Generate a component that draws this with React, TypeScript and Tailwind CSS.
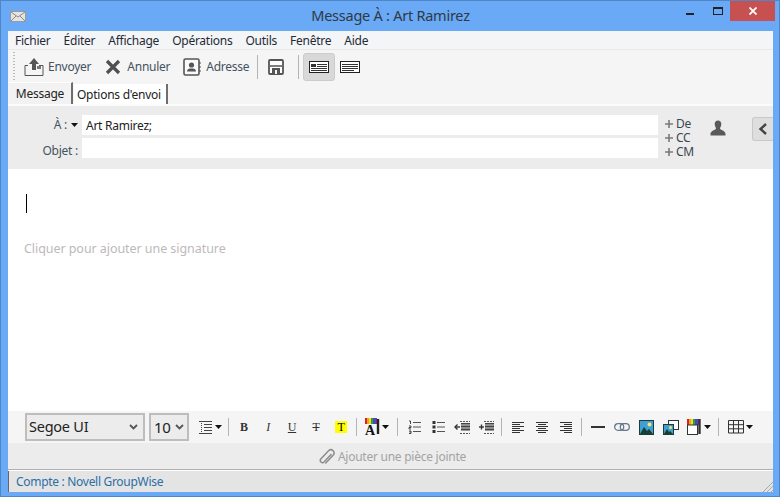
import React from 'react';

const Sep = ({ h = 'h-[24px]', m = 'mx-[6px]' }: { h?: string; m?: string }) => (
  <div className={`w-px ${h} ${m} bg-[#b4b4b4] shrink-0`} />
);

const Caret = () => (
  <svg width="7" height="4" viewBox="0 0 7 4" className="shrink-0"><path d="M0 0h7L3.5 4z" fill="#111" /></svg>
);

const Mail = () => (
  <svg width="16" height="11" viewBox="0 0 16 11">
    <rect x="0.5" y="0.5" width="15" height="10" fill="#e4e4e4" stroke="#9a9a9a" />
    <path d="M1 1l7 5 7-5M1 10l5-5M15 10l-5-5" fill="none" stroke="#8a8a8a" />
  </svg>
);

const SendIcon = () => (
  <svg width="20" height="20" viewBox="0 0 20 20">
    <path d="M4 8.5H1v10h18v-10h-4" fill="none" stroke="#555" />
    <path d="M10 1l5 6h-3v6H8V7H5z" fill="#555" />
    <path d="M13 9h4v3h-4z" fill="#777" />
  </svg>
);

const CancelIcon = () => (
  <svg width="16" height="16" viewBox="0 0 16 16">
    <path d="M2 2l12 12M14 2L2 14" stroke="#4f4f4f" strokeWidth="3.2" />
  </svg>
);

const AddressIcon = () => (
  <svg width="18" height="18" viewBox="0 0 18 18">
    <rect x="1" y="1" width="15" height="16" rx="1.5" fill="#fafafa" stroke="#555" strokeWidth="1.6" />
    <circle cx="8.5" cy="7" r="2.6" fill="#555" />
    <path d="M4 13.5c0-2.5 2-3 4.500-3s4.500.5 4.500 3z" fill="#555" />
    <path d="M17 4v2M17 8v2M17 12v2" stroke="#555" />
  </svg>
);

const SaveIcon = () => (
  <svg width="16" height="16" viewBox="0 0 16 16">
    <rect x="1" y="1" width="14" height="14" rx="1" fill="#fff" stroke="#555" strokeWidth="1.8" />
    <path d="M2 7h12" stroke="#555" strokeWidth="1.500" />
    <path d="M4 15V9h8v6z" fill="#555" />
    <rect x="7" y="11" width="2" height="4" fill="#f5f5f5" />
  </svg>
);

const ViewA = () => (
  <svg width="20" height="12" viewBox="0 0 20 12">
    <rect x="0.500" y="0.500" width="19" height="11" fill="#fff" stroke="#222" />
    <rect x="2" y="3" width="5" height="3" fill="#333" />
    <path d="M8 3.500h10M8 5.500h10M2 7.500h16M2 9.500h16" stroke="#333" />
  </svg>
);

const ViewB = () => (
  <svg width="20" height="12" viewBox="0 0 20 12">
    <rect x="0.500" y="0.500" width="19" height="11" fill="#fff" stroke="#222" />
    <path d="M2 3.500h16M2 5.500h16M2 7.500h16M2 9.500h12" stroke="#333" />
  </svg>
);

const Person = () => (
  <svg width="16" height="16" viewBox="0 0 16 16">
    <path d="M8 0.500c2 0 3.300 1.500 3.300 3.500S10 7.500 10 8.500c0 1.500 5.500 2 5.500 5.500v1.500H.5V14c0-3.500 5.500-4 5.500-5.500C6 7.500 4.700 6 4.700 4S6 .5 8 .5z" fill="#595959" />
  </svg>
);

const Plus = () => (
  <svg width="8" height="8" viewBox="0 0 8 8" className="shrink-0"><path d="M4 0v8M0 4h8" stroke="#7a7a7a" strokeWidth="1.600" /></svg>
);

const Chevron = ({ s = '#555' }: { s?: string }) => (
  <svg width="9" height="6" viewBox="0 0 9 6"><path d="M1 1l3.500 3.500L8 1" fill="none" stroke={s} strokeWidth="1.800" /></svg>
);

const Lines = ({ rows }: { rows: [number, number][] }) => (
  <svg width="13" height="13" viewBox="0 0 13 13">
    {rows.map(([x, w], i) => (
      <rect key={i} x={x} y={i * 2 + 1} width={w} height="1" fill="#333" />
    ))}
  </svg>
);

const LineSpacing = () => (
  <svg width="14" height="13" viewBox="0 0 14 13">
    <path d="M0 .5h13M5 3.500h8M5 6.500h8M5 9.500h8M0 12.500h13" stroke="#444" />
    <path d="M2.500 2v9" stroke="#444" strokeDasharray="1 1" />
  </svg>
);

const NumList = () => (
  <svg width="14" height="14" viewBox="0 0 14 14">
    <path d="M5 2.500h8M5 7h8M5 11.500h8" stroke="#555" />
    <path d="M1 1h1.500v3M1 6h2v1.500H1V9h2M1 11h2v1H1.500M3 12v1.500H1" fill="none" stroke="#333" strokeWidth=".9" />
  </svg>
);

const BulletList = () => (
  <svg width="14" height="14" viewBox="0 0 14 14">
    <path d="M5 2.500h8M5 7h8M5 11.500h8" stroke="#555" />
    <rect x="0.500" y="1" width="3" height="3" fill="#333" />
    <rect x="0.500" y="5.500" width="3" height="3" fill="#333" />
    <rect x="0.500" y="10" width="3" height="3" fill="#333" />
  </svg>
);

const Indent = ({ flip }: { flip?: boolean }) => (
  <svg width="17" height="15" viewBox="0 0 17 15">
    <path d="M6 1.500h10M6 13.500h10" stroke="#555" strokeDasharray="2 1" />
    <rect x="7" y="3" width="9" height="7.500" fill="#444" />
    <path d="M7 5h9M7 8h9" stroke="#ddd" />
    <path d="M1 7h5" stroke="#333" strokeWidth="1.400" />
    {flip ? <path d="M3.500 4.500v5" stroke="#333" strokeWidth="1.400" /> : <path d="M3.500 4.500L1 7l2.500 2.500" fill="none" stroke="#333" strokeWidth="1.400" />}
  </svg>
);

const LinkIcon = () => (
  <svg width="16" height="8" viewBox="0 0 16 8">
    <rect x="0.700" y="0.700" width="9" height="6.600" rx="3.300" fill="none" stroke="#66788c" strokeWidth="1.300" />
    <rect x="6.300" y="0.700" width="9" height="6.600" rx="3.300" fill="none" stroke="#66788c" strokeWidth="1.300" />
  </svg>
);

const Picture = ({ size = 15 }: { size?: number }) => (
  <svg width={size} height={size} viewBox="0 0 15 15">
    <rect width="15" height="15" fill="#1d3b3a" />
    <rect x="1" y="1" width="13" height="13" fill="#3f9fd6" />
    <circle cx="10.500" cy="4.500" r="2" fill="#f4e86a" />
    <path d="M1 14l4-7 3 4 2-2 4 5z" fill="#17402f" />
  </svg>
);

const Pictures = () => (
  <svg width="16" height="15" viewBox="0 0 16 15">
    <rect x="5.500" y="0.500" width="10" height="9" fill="#fff" stroke="#333" />
    <rect x="0" y="4" width="11" height="11" fill="#1d3b3a" />
    <rect x="1" y="5" width="9" height="9" fill="#3f9fd6" />
    <circle cx="7.500" cy="7.500" r="1.500" fill="#f4e86a" />
    <path d="M1 14l3-5 2 3 1-1 3 3z" fill="#17402f" />
  </svg>
);

const Rainbow = () => (
  <>
    <rect x="0" y="0" width="2" height="6" fill="#e02020" />
    <rect x="2" y="0" width="2" height="6" fill="#f4a020" />
    <rect x="4" y="0" width="2" height="6" fill="#e8e020" />
    <rect x="6" y="0" width="2" height="6" fill="#30a030" />
    <rect x="8" y="0" width="2" height="6" fill="#3050d0" />
    <rect x="10" y="0" width="2" height="6" fill="#8030b0" />
  </>
);

const TextColor = () => (
  <svg width="16" height="21" viewBox="0 0 16 21" className="mt-[3px]">
    <Rainbow />
    <path d="M13 1v15" stroke="#222" strokeWidth="2.400" />
    <text x="0" y="17" fontFamily="'Liberation Serif', serif" fontWeight="700" fontSize="14" fill="#111">A</text>
  </svg>
);

const BgColor = () => (
  <svg width="15" height="16" viewBox="0 0 15 16">
    <Rainbow />
    <rect x="0.500" y="6" width="10" height="9.500" fill="#fff" stroke="#333" />
    <path d="M12.500 0v15" stroke="#333" strokeWidth="2.400" />
  </svg>
);

const TableIcon = () => (
  <svg width="17" height="14" viewBox="0 0 17 14">
    <path d="M.5.500h15v12.500H.5zM.5 4.700h15M.5 8.800h15M5.500.5V13M10.500.5V13" fill="none" stroke="#333" />
  </svg>
);

const Clip = () => (
  <svg width="16" height="18" viewBox="0 0 16 18">
    <path d="M13 5.500l-7.500 8a2.200 2.200 0 01-3.200-3l8-8.500a3.200 3.200 0 014.500 4.500l-8 8.500" fill="none" stroke="#8c8c8c" strokeWidth="1.500" transform="translate(-.5 .5)" />
  </svg>
);

const ResizeGrip = () => (
  <svg width="10" height="10" viewBox="0 0 10 10" className="shrink-0 self-end">
    <path d="M0 10L10 0M4 10l6-6M8 10l2-2" stroke="#a8a8a8" />
  </svg>
);

const Grip = () => (
  <div className="w-[2px] h-[30px] ml-[5px] shrink-0 bg-[repeating-linear-gradient(to_bottom,#bbbbbb_0,#bbbbbb_1px,transparent_1px,transparent_3px)]" />
);

const ToolButton = ({ icon, label, className }: { icon: React.ReactNode; label: string; className?: string }) => (
  <div className={`flex items-center ${className ?? ''}`}>
    {icon}
    <span className="text-[#45525f]">{label}</span>
  </div>
);

const FieldAction = ({ label }: { label: string }) => (
  <div className="flex items-center gap-[3px] h-[14px]">
    <Plus />
    <span className="text-[#3c4650]">{label}</span>
  </div>
);

const menus = ['Fichier', 'Éditer', 'Affichage', 'Opérations', 'Outils', 'Fenêtre', 'Aide'];

export default function App() {
  return (
    <div className="w-[780px] h-[497px] bg-[#69a9f5] border border-[#4f86c6] flex flex-col overflow-hidden text-[12px] tracking-[-0.25px] text-[#222] font-['Noto_Sans','Open_Sans',sans-serif]">
      {/* Title bar */}
      <div className="h-[30px] shrink-0 flex items-start">
        <div className="w-[40px] pl-[9px] pt-[10px] shrink-0"><Mail /></div>
        <div className="flex-1 text-center pt-[3px] text-[14.500px] leading-[22px] text-[#2f3a45] pl-[65px]">Message À : Art Ramirez</div>
        <div className="w-[100px] mr-[4px] flex shrink-0 items-start">
          <div className="w-[30px] h-[20px] flex justify-center items-end pb-[6px]"><div className="w-[8px] h-[2px] bg-[#222]" /></div>
          <div className="w-[25px] pt-[6px] flex justify-center"><div className="w-[10px] h-[8px] border border-t-2 border-[#222]" /></div>
          <div className="w-[45px] h-[20px] bg-[#c75050] flex items-center justify-center">
            <svg width="8" height="8" viewBox="0 0 8 8"><path d="M.5.5l7 7M7.500.5l-7 7" stroke="#fff" strokeWidth="1.800" /></svg>
          </div>
        </div>
      </div>

      {/* Window content */}
      <div className="flex-1 ml-[7px] mr-[6px] mb-[4px] bg-white flex flex-col min-h-0 overflow-hidden">
        <div className="h-[19px] shrink-0 bg-[#f4f5f7] border-b border-[#e8e8e8] flex items-center pl-[7px] pt-[2px] gap-[13px] text-[#1e2a36]">
          {menus.map((m) => <span key={m}>{m}</span>)}
        </div>

        <div className="h-[34px] shrink-0 bg-[#f5f5f5] flex items-center">
          <Grip />
          <ToolButton className="ml-[9px] gap-[4px]" icon={<SendIcon />} label="Envoyer" />
          <ToolButton className="ml-[14px] gap-[6px]" icon={<CancelIcon />} label="Annuler" />
          <ToolButton className="ml-[13px] gap-[5px]" icon={<AddressIcon />} label="Adresse" />
          <Sep h="h-[24px]" m="ml-[8px] mr-[10px]" />
          <SaveIcon />
          <Sep h="h-[24px]" m="ml-[14px] mr-[4px]" />
          <div className="w-[32px] h-[28px] rounded-[3px] bg-[#d8d8d8] border border-[#cccccc] flex items-center justify-center"><ViewA /></div>
          <div className="ml-[5px]"><ViewB /></div>
        </div>

        <div className="h-[22px] shrink-0 bg-[#f5f5f5] border-b-2 border-[#fbfbfb] flex items-end pl-px">
          <div className="h-[22px] w-[64px] bg-[#f2f2f2] border-t border-white border-r-2 border-r-[#6e6e6e] text-center leading-[22px] text-[#222]">Message</div>
          <div className="h-[20px] ml-px pl-[3px] pr-[5px] bg-white border-r-2 border-r-[#6e6e6e] leading-[21px] text-[#222]">Options d'envoi</div>
        </div>

        <div className="h-[63px] shrink-0 bg-[#ececec] flex items-start">
          <div className="w-[74px] pt-[9px] flex flex-col items-end pr-[3px] shrink-0 text-[#45525f]">
            <div className="flex items-center h-[20px] gap-[4px] mr-[1px]"><span>À :</span><Caret /></div>
            <div className="h-[20px] leading-[25px] mt-[3px] mr-[1px]">Objet :</div>
          </div>
          <div className="w-[576px] pt-[9px] flex flex-col gap-[3px] shrink-0">
            <div className="h-[20px] bg-white pl-[4px] leading-[21px] text-[#222] text-[12px]">Art Ramirez;</div>
            <div className="h-[20px] bg-white" />
          </div>
          <div className="ml-[7px] pt-[11px] flex flex-col w-[45px] shrink-0 text-[12px] leading-[14px]">
            <FieldAction label="De" />
            <FieldAction label="CC" />
            <FieldAction label="CM" />
          </div>
          <div className="mt-[14px] shrink-0"><Person /></div>
          <div className="mt-[11px] ml-[26px] w-[21px] h-[24px] bg-[#dedede] border border-r-0 border-[#c8c8c8] rounded-l-[3px] flex items-center justify-center shrink-0">
            <svg width="10" height="12" viewBox="0 0 10 12"><path d="M8 1L2.500 6 8 11" fill="none" stroke="#444" strokeWidth="2.400" /></svg>
          </div>
        </div>

        {/* Message body */}
        <div className="flex-1 bg-white pl-[16px] pt-[25px] min-h-0">
          <div className="w-px h-[19px] bg-black ml-[2px]" />
          <div className="mt-[27px] text-[#bdb9ba] text-[12.500px] tracking-[-0.06px] leading-[18px]">Cliquer pour ajouter une signature</div>
        </div>

        {/* Format toolbar */}
        <div className="h-[32px] shrink-0 bg-[#f5f5f5] flex items-center pl-[17px]">
          <div className="w-[120px] h-[28px] bg-[#ececec] border-2 border-[#bdbdbd] flex items-center justify-between pl-[2px] pr-[5px] text-[14.500px] text-[#222]">
            <span>Segoe UI</span><Chevron />
          </div>
          <div className="ml-[4px] w-[40px] h-[28px] bg-[#ececec] border-2 border-[#bdbdbd] flex items-center justify-between pl-[3px] pr-[3px] text-[15px] text-[#222]">
            <span>10</span><Chevron />
          </div>
          <div className="ml-[10px] flex items-center gap-[2px]"><LineSpacing /><Caret /></div>
          <Sep h="h-[18px]" m="ml-[6px] mr-[10px]" />
          <div className="flex items-center gap-[14px] font-['Liberation_Serif',serif] text-[12px] text-[#333]">
            <span className="w-[10px] text-center font-bold">B</span>
            <span className="w-[10px] text-center italic">I</span>
            <span className="w-[10px] text-center underline">U</span>
            <span className="w-[10px] text-center line-through">T</span>
            <span className="w-[12px] h-[12px] bg-[#ffff00] text-center leading-[12px] text-black">T</span>
          </div>
          <Sep h="h-[18px]" m="ml-[9px] mr-[8px]" />
          <div className="flex items-center gap-[1px]"><TextColor /><Caret /></div>
          <Sep h="h-[18px]" m="ml-[8px] mr-[10px]" />
          <NumList />
          <div className="ml-[10px]"><BulletList /></div>
          <div className="ml-[8px]"><Indent /></div>
          <div className="ml-[7px]"><Indent flip /></div>
          <Sep h="h-[18px]" m="ml-[6px] mr-[10px]" />
          <div className="flex items-center gap-[11px]">
            <Lines rows={[[0, 12], [0, 8], [0, 12], [0, 8], [0, 12], [0, 8]]} />
            <Lines rows={[[0, 12], [2, 8], [0, 12], [2, 8], [0, 12], [2, 8]]} />
            <Lines rows={[[0, 12], [4, 8], [0, 12], [4, 8], [0, 12], [4, 8]]} />
          </div>
          <Sep h="h-[18px]" m="ml-[8px] mr-[9px]" />
          <div className="w-[14px] h-[2px] bg-[#333]" />
          <div className="ml-[9px]"><LinkIcon /></div>
          <div className="ml-[9px]"><Picture /></div>
          <div className="ml-[9px]"><Pictures /></div>
          <div className="ml-[8px] flex items-center gap-[2px]"><BgColor /><Caret /></div>
          <Sep h="h-[18px]" m="ml-[7px] mr-[9px]" />
          <div className="flex items-center gap-[1px]"><TableIcon /><Caret /></div>
        </div>

        {/* Attachment bar */}
        <div className="h-[26px] shrink-0 bg-[#ececec] flex items-center justify-center gap-[3px] pl-[4px] pt-[2px] text-[#a3a3a3]">
          <Clip />
          <span>Ajouter une pièce jointe</span>
        </div>

        {/* Status bar */}
        <div className="h-[23px] shrink-0 border-t border-[#b0b0b0] bg-[#e4e4e4] flex flex-col">
          <div className="h-px bg-white shrink-0" />
          <div className="flex-1 flex items-stretch justify-between">
            <div className="border-l border-[#666] pl-[7px] text-[#2c6ea6] tracking-[-0.3px] leading-[21px]">Compte : Novell GroupWise</div>
            <ResizeGrip />
          </div>
        </div>
      </div>
    </div>
  );
}
